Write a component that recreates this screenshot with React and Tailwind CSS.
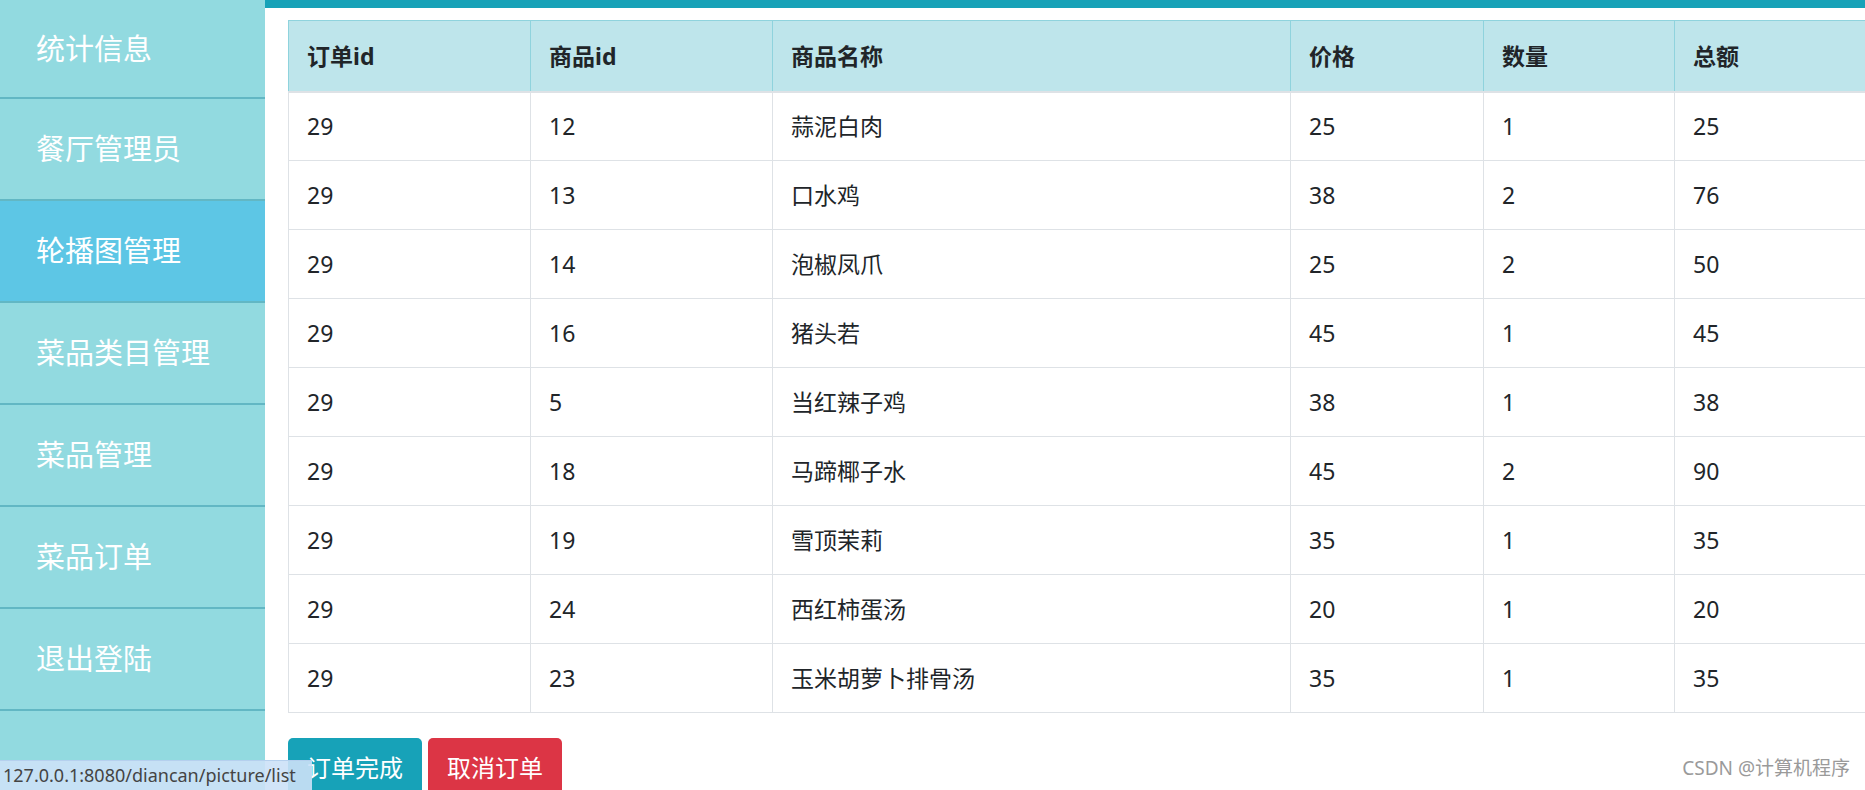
import React from 'react'

const menu = ['统计信息', '餐厅管理员', '轮播图管理', '菜品类目管理', '菜品管理', '菜品订单', '退出登陆']

const rows = [
    ['29', '12', '蒜泥白肉', '25', '1', '25'],
    ['29', '13', '口水鸡', '38', '2', '76'],
    ['29', '14', '泡椒凤爪', '25', '2', '50'],
    ['29', '16', '猪头若', '45', '1', '45'],
    ['29', '5', '当红辣子鸡', '38', '1', '38'],
    ['29', '18', '马蹄椰子水', '45', '2', '90'],
    ['29', '19', '雪顶茉莉', '35', '1', '35'],
    ['29', '24', '西红柿蛋汤', '20', '1', '20'],
    ['29', '23', '玉米胡萝卜排骨汤', '35', '1', '35'],
]

const heads = ['订单id', '商品id', '商品名称', '价格', '数量', '总额']

const App = () =>
{
    return (
        <div
            className="relative flex w-[1865px] h-[790px] overflow-hidden bg-white text-[#212529]"
            style={{ fontFamily: '"Noto Sans", "Noto Sans CJK SC", sans-serif' }}
        >
            {/* Sidebar */}
            <div className="w-[265px] shrink-0 bg-[#92dae0] flex flex-col">
                {menu.map((item, i) => (
                    <div
                        key={item}
                        className={
                            (i === 0 ? 'h-[97px] ' : 'h-[102px] border-t-2 border-[#62b7c4] ') +
                            (i === 2 ? 'bg-[#5dc6e5] ' : '') +
                            'shrink-0 flex items-center pl-[36px] text-white text-[29px]'
                        }
                    >
                        {item}
                    </div>
                ))}
                <div className="border-t-2 border-[#62b7c4] flex-1"></div>
            </div>

            {/* Main */}
            <div className="flex-1 min-w-0 flex flex-col">
                <div className="h-[8px] shrink-0 bg-[#17a2b8]"></div>
                <div className="shrink-0 pl-[23px] pt-[12px]">
                    <table className="table-fixed border-collapse w-[1600px] text-[23px]">
                        <colgroup>
                            <col className="w-[242px]" />
                            <col className="w-[242px]" />
                            <col className="w-[518px]" />
                            <col className="w-[193px]" />
                            <col className="w-[191px]" />
                            <col className="w-[214px]" />
                        </colgroup>
                        <thead>
                            <tr className="bg-[#bee5eb] h-[71px]">
                                {heads.map((h) => (
                                    <th
                                        key={h}
                                        className="text-left font-bold px-[18px] border border-[#8fd3dd] border-b-2 border-b-[#dee2e6]"
                                    >
                                        {h}
                                    </th>
                                ))}
                            </tr>
                        </thead>
                        <tbody>
                            {rows.map((r, i) => (
                                <tr key={i} className="h-[69px]">
                                    {r.map((c, j) => (
                                        <td key={j} className="px-[18px] border border-[#dee2e6]">
                                            {c}
                                        </td>
                                    ))}
                                </tr>
                            ))}
                        </tbody>
                    </table>

                    <div className="flex gap-[6px] mt-[25px]">
                        <button className="h-[60px] px-[19px] rounded-[5px] bg-[#17a2b8] text-white text-[24px]">
                            订单完成
                        </button>
                        <button className="h-[60px] px-[19px] rounded-[5px] bg-[#dc3545] text-white text-[24px]">
                            取消订单
                        </button>
                    </div>
                </div>
            </div>

            {/* Status bar */}
            <div className="absolute left-0 bottom-0 h-[30px] w-[312px] bg-[#cce1f7]/90 border-t border-[#b5d0ee] flex items-center pl-[3px] text-[18px] text-[#444]">
                127.0.0.1:8080/diancan/picture/list
            </div>

            {/* Watermark */}
            <div className="absolute right-[15px] bottom-[8px] text-[19px] text-[#9a9a9a]">
                CSDN @计算机程序
            </div>
        </div>
    )
}

export default App
